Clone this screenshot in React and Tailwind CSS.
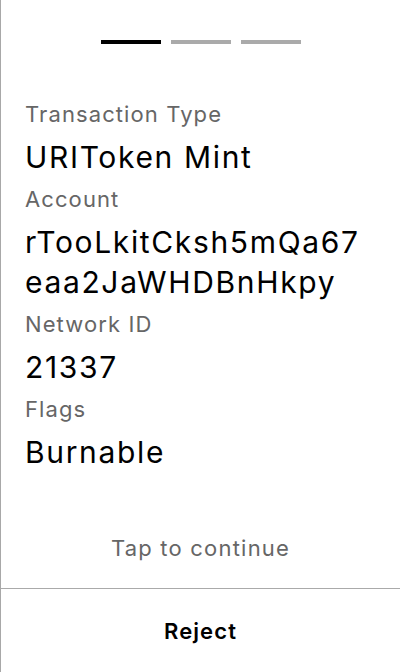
export default function App() {
  const rows = [
    ["Transaction Type", "URIToken Mint"],
    ["Account", "rTooLkitCksh5mQa67eaa2JaWHDBnHkpy"],
    ["Network ID", "21337"],
    ["Flags", "Burnable"],
  ];
  return (
    <div className="h-[672px] w-[400px] bg-white border-l border-[#a8a8a8] flex flex-col font-['Inter',sans-serif]">
      <div className="flex-1 flex flex-col">
        <div className="flex justify-center gap-[10px] pt-[40px]">
          <div className="w-[60px] h-[4px] bg-black" />
          <div className="w-[60px] h-[4px] bg-[#aaaaaa]" />
          <div className="w-[60px] h-[4px] bg-[#aaaaaa]" />
        </div>
        <div className="flex flex-col gap-[6px] pl-6 pr-[28px] pt-[54px]">
          {rows.map(([label, value]) => (
            <div key={label} className="contents">
              <div className="text-[22px] leading-[33px] tracking-[0.05em] text-[#666666]">{label}</div>
              <div className="text-[30px] leading-[40px] tracking-[0.055em] text-black break-all">{value}</div>
            </div>
          ))}
        </div>
        <div className="flex-1" />
        <div className="text-center text-[22px] leading-[32px] tracking-[0.055em] text-[#666666] pb-[24px]">Tap to continue</div>
      </div>
      <div className="h-[84px] border-t border-[#aaaaaa] flex items-center justify-center">
        <span className="text-[22px] leading-[32px] tracking-[0.05em] font-semibold text-black">Reject</span>
      </div>
    </div>
  );
}
